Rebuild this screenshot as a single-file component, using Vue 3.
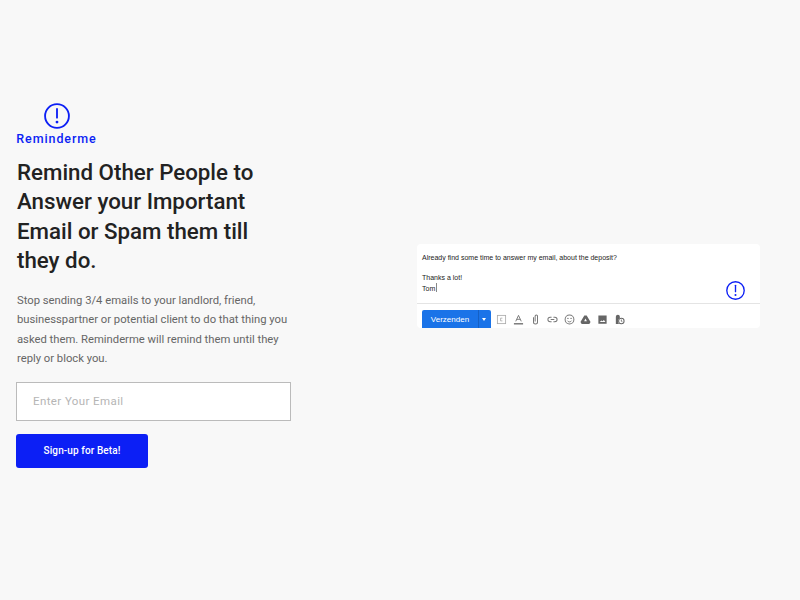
<script setup>
const tools = ['format', 'text', 'clip', 'link', 'smile', 'drive', 'photo', 'lock']
</script>

<template>
  <main class="page">
    <section class="intro">
      <div class="logo">
        <svg class="alert logo-icon" viewBox="0 0 24 24">
          <circle cx="12" cy="12" r="11" />
          <path d="M12 5.5v8" />
          <circle class="dot" cx="12" cy="17.6" r="1.3" />
        </svg>
        <span class="logo-name">Reminderme</span>
      </div>
      <h1>Remind Other People to Answer your Important Email or Spam them till they do.</h1>
      <p>Stop sending 3/4 emails to your landlord, friend, businesspartner or potential client to do that thing you asked them. Reminderme will remind them until they reply or block you.</p>
      <form @submit.prevent>
        <input type="email" placeholder="Enter Your Email" />
        <button type="submit">Sign-up for Beta!</button>
      </form>
    </section>

    <section class="mail">
      <div class="mail-body">
        <div class="line">Already find some time to answer my email, about the deposit?</div>
        <div class="line gap">Thanks a lot!</div>
        <div class="line">Tom<span class="caret"></span></div>
        <svg class="alert mail-icon" viewBox="0 0 24 24">
          <circle cx="12" cy="12" r="11" />
          <path d="M12 5.5v8" />
          <circle class="dot" cx="12" cy="17.6" r="1.3" />
        </svg>
      </div>
      <div class="toolbar">
        <div class="send">
          <span class="send-label">Verzenden</span>
          <span class="send-arrow"></span>
        </div>
        <div class="tools">
          <svg v-for="t in tools" :key="t" class="tool" viewBox="0 0 12 12">
            <template v-if="t === 'format'">
              <rect class="thin" x="1.5" y="1.5" width="9" height="9" />
              <path class="thin" d="M7 4.5H5v3h2" />
            </template>
            <template v-else-if="t === 'text'">
              <path class="thin" d="M3 8l3-6.5L9 8M4.2 5.8h3.6" />
              <rect x="1" y="10" width="10" height="1.4" />
            </template>
            <path v-else-if="t === 'clip'" class="med" d="M3.800 3.500v5.300a2.200 2.200 0 0 0 4.400 0V2.300a1.300 1.300 0 0 0-2.600 0V8.300" />
            <path v-else-if="t === 'link'" class="med" d="M5 3.500H3.500a2.500 2.500 0 0 0 0 5H5M7 3.500h1.500a2.500 2.500 0 0 1 0 5H7M4 6h4" />
            <template v-else-if="t === 'smile'">
              <circle class="med" cx="6" cy="6" r="4.800" />
              <circle cx="4.300" cy="4.800" r=".7" />
              <circle cx="7.700" cy="4.800" r=".7" />
              <path class="thin" d="M3.800 7.300a2.500 2.500 0 0 0 4.400 0" />
            </template>
            <path v-else-if="t === 'drive'" d="M4.700 1.500h2.600L11.500 8.800 10.200 10.800H1.800L.5 8.800zM6 5 4.500 8h3z" fill-rule="evenodd" />
            <path v-else-if="t === 'photo'" d="M1.500 1.500h9v9h-9zM2.800 8.800h6.400L7.500 6.500 6 8 5 7z" fill-rule="evenodd" />
            <template v-else>
              <path d="M2 5V3a2.200 2.200 0 0 1 4.400 0v1.500H7.500A3.500 3.500 0 0 0 6 11H2z" />
              <circle class="clock" cx="8" cy="7.700" r="3" />
              <path class="thin" d="M8 6v1.900l1.200.6" />
            </template>
          </svg>
        </div>
      </div>
    </section>
  </main>
</template>

<style>
body {
  background: #f8f8f8;
}
</style>

<style scoped>
* {
  margin: 0;
  padding: 0;
  box-sizing: border-box;
}

.page {
  display: flex;
  align-items: center;
  width: 800px;
  height: 600px;
  padding: 0 40px 28px 16px;
  justify-content: space-between;
  background: #f8f8f8;
  font-family: Roboto, "Noto Sans", sans-serif;
}

.intro {
  width: 275px;
  margin-bottom: 2px;
}

.logo {
  display: flex;
  flex-direction: column;
  align-items: center;
  width: 81px;
  gap: 3px;
}

.alert {
  fill: none;
  stroke: #0c1ff5;
  stroke-width: 1.7;
  stroke-linecap: round;
}

.alert .dot {
  fill: #0c1ff5;
  stroke: none;
}

.logo-icon {
  width: 26px;
  height: 26px;
}

.logo-name {
  color: #0c1ff5;
  font-size: 12.500px;
  line-height: 14px;
  font-weight: 500;
  letter-spacing: 0.9px;
}

h1 {
  margin-top: 12px;
  padding-left: 1px;
  color: #222;
  font-size: 22.300px;
  line-height: 29.500px;
  font-weight: 500;
}

p {
  margin-top: 15px;
  padding-left: 1px;
  color: #666;
  font-size: 11.250px;
  line-height: 19.500px;
}

form {
  display: flex;
  flex-direction: column;
  align-items: flex-start;
  gap: 13px;
  margin-top: 13px;
}

input {
  width: 275px;
  height: 39px;
  padding-left: 16px;
  background: #fff;
  border: 1px solid #bbb;
  font-family: inherit;
  font-size: 11.500px;
  letter-spacing: 0.4px;
  outline: none;
}

input::placeholder {
  color: #b5b5b5;
}

button {
  width: 132px;
  height: 34px;
  background: #0c1ff5;
  border: 0;
  border-radius: 3px;
  color: #fff;
  font-family: inherit;
  font-size: 10px;
  font-weight: 500;
  letter-spacing: 0.1px;
}

.mail {
  width: 343px;
  height: 84px;
  background: #fff;
  border-radius: 4px;
  font-family: "Liberation Sans", Arial, sans-serif;
  overflow: hidden;
}

.mail-body {
  position: relative;
  height: 60px;
  padding: 9px 5px 0;
  border-bottom: 1px solid #e4e4e4;
  color: #222;
  font-size: 7px;
  line-height: 10px;
}

.gap {
  margin-top: 10px;
}

.caret {
  display: inline-block;
  width: 1px;
  height: 9px;
  margin-left: 1px;
  vertical-align: -1px;
  background: #888;
}

.mail-icon {
  position: absolute;
  right: 15px;
  top: 37px;
  width: 19px;
  height: 19px;
}

.toolbar {
  display: flex;
  align-items: flex-end;
  height: 24px;
  padding-left: 5px;
}

.send {
  display: flex;
  width: 69px;
  height: 18px;
  background: #1a73e8;
  border-radius: 2px 2px 0 0;
  color: #fff;
  font-size: 8px;
  line-height: 19px;
}

.send-label {
  width: 57px;
  text-align: center;
  border-right: 1px solid #1560c4;
}

.send-arrow {
  width: 0;
  height: 0;
  margin: 8px 0 0 3px;
  border-left: 2.5px solid transparent;
  border-right: 2.5px solid transparent;
  border-top: 3px solid #fff;
}

.tools {
  display: flex;
  align-items: center;
  gap: 5.900px;
  height: 22px;
  margin-left: 5px;
  align-self: flex-start;
  margin-top: 4px;
}

.tool {
  width: 11px;
  height: 11px;
  fill: #666;
}

.thin {
  fill: none;
  stroke: #666;
  stroke-width: 0.9;
}

.med {
  fill: none;
  stroke: #777;
  stroke-width: 1.1;
}

.clock {
  fill: #fff;
  stroke: #666;
  stroke-width: 1.1;
}

.tool:nth-child(1) .thin {
  stroke: #aaa;
}
</style>
